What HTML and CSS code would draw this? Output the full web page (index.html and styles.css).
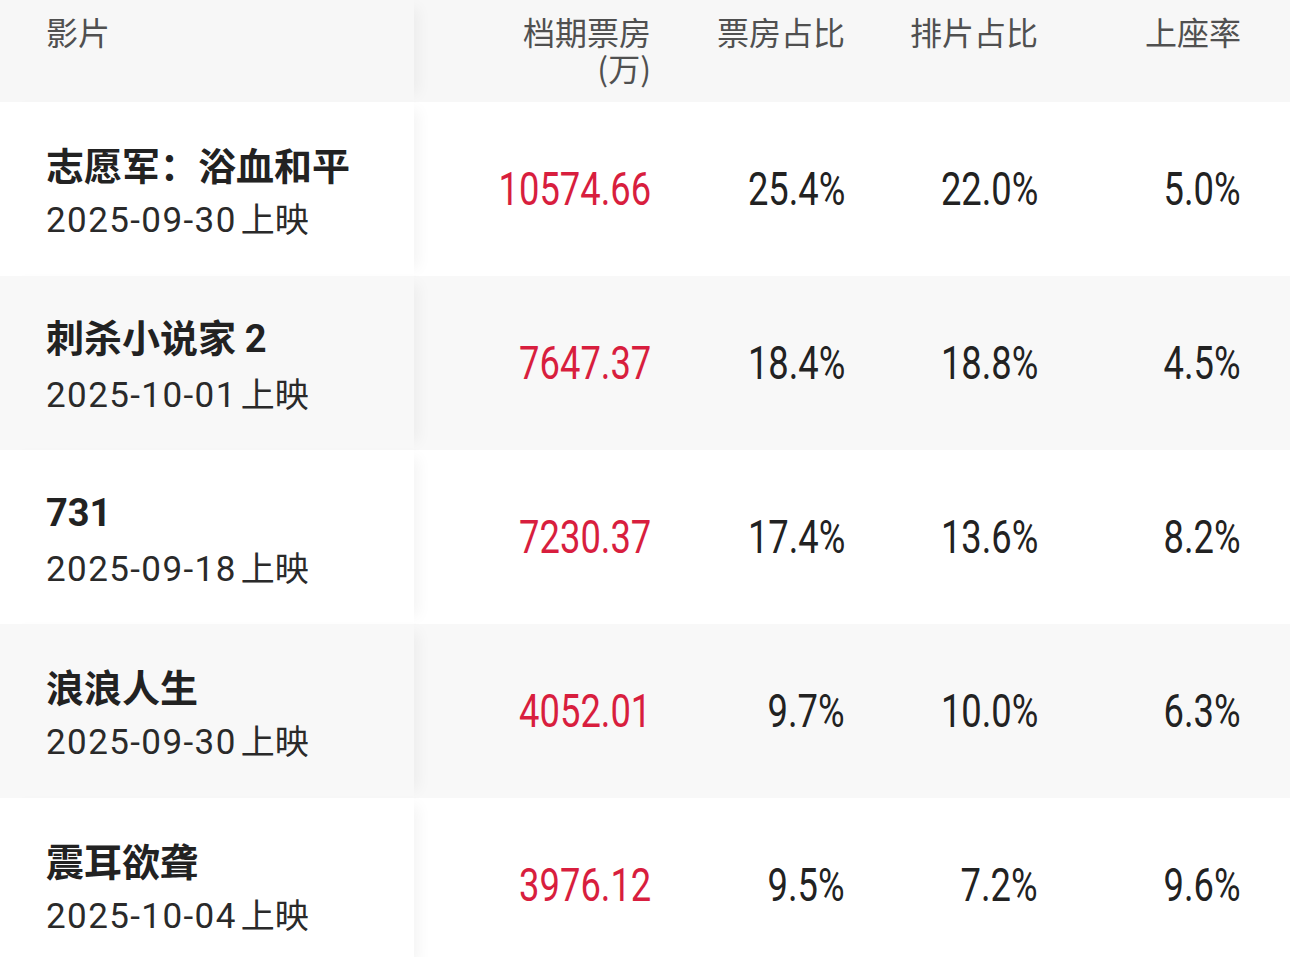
FILE: index.html
```html
<!DOCTYPE html>
<html lang="zh-CN">
<head>
<meta charset="utf-8">
<title>档期票房</title>
<link rel="stylesheet" href="styles.css">
</head>
<body>
<div class="table">
  <div class="row head">
    <div class="film">影片</div>
    <div class="cell">档期票房<br>(万)</div>
    <div class="cell">票房占比</div>
    <div class="cell">排片占比</div>
    <div class="cell">上座率</div>
  </div>
  <div class="row">
    <div class="film"><div class="name">志愿军：浴血和平</div><div class="date"><span class="d">2025-09-30</span>上映</div></div>
    <div class="cell num red"><span>10574.66</span></div>
    <div class="cell num"><span>25.4%</span></div>
    <div class="cell num"><span>22.0%</span></div>
    <div class="cell num"><span>5.0%</span></div>
  </div>
  <div class="row alt">
    <div class="film"><div class="name">刺杀小说家 <span class="lat">2</span></div><div class="date"><span class="d">2025-10-01</span>上映</div></div>
    <div class="cell num red"><span>7647.37</span></div>
    <div class="cell num"><span>18.4%</span></div>
    <div class="cell num"><span>18.8%</span></div>
    <div class="cell num"><span>4.5%</span></div>
  </div>
  <div class="row">
    <div class="film"><div class="name"><span class="lat">731</span></div><div class="date"><span class="d">2025-09-18</span>上映</div></div>
    <div class="cell num red"><span>7230.37</span></div>
    <div class="cell num"><span>17.4%</span></div>
    <div class="cell num"><span>13.6%</span></div>
    <div class="cell num"><span>8.2%</span></div>
  </div>
  <div class="row alt">
    <div class="film"><div class="name">浪浪人生</div><div class="date"><span class="d">2025-09-30</span>上映</div></div>
    <div class="cell num red"><span>4052.01</span></div>
    <div class="cell num"><span>9.7%</span></div>
    <div class="cell num"><span>10.0%</span></div>
    <div class="cell num"><span>6.3%</span></div>
  </div>
  <div class="row">
    <div class="film"><div class="name">震耳欲聋</div><div class="date"><span class="d">2025-10-04</span>上映</div></div>
    <div class="cell num red"><span>3976.12</span></div>
    <div class="cell num"><span>9.5%</span></div>
    <div class="cell num"><span>7.2%</span></div>
    <div class="cell num"><span>9.6%</span></div>
  </div>
</div>
</body>
</html>
```
FILE: styles.css
```css
html, body {
  margin: 0;
  padding: 0;
  background: #ffffff;
}
body {
  font-family: "Noto Sans CJK SC", "Noto Sans", sans-serif;
  color: #222222;
  overflow: hidden;
}
.table {
  width: 1290px;
}
.row {
  display: grid;
  grid-template-columns: 414px 237px 194px 193px 203px;
  height: 174px;
  align-items: center;
  background: #ffffff;
}
.row.alt {
  background: #f8f8f8;
}
.row.head {
  height: 102px;
  background: #f7f7f7;
  align-items: stretch;
}
.film {
  height: 100%;
  box-sizing: border-box;
  padding: 6px 0 0 46px;
  display: flex;
  flex-direction: column;
  justify-content: center;
  background: inherit;
  position: relative;
  z-index: 1;
  box-shadow: 12px 0 14px -8px rgba(0, 0, 0, 0.05);
}
.cell {
  text-align: right;
}
.head .film,
.head .cell {
  font-size: 32px;
  line-height: 36px;
  color: #505050;
  padding-top: 13px;
  justify-content: flex-start;
}
.name {
  font-size: 38px;
  font-weight: 700;
  line-height: 54px;
  color: #222222;
  white-space: nowrap;
}
.lat {
  font-family: "Roboto", "Liberation Sans", sans-serif;
  font-weight: 700;
}
.date {
  font-size: 34px;
  line-height: 54px;
  color: #2a2a2a;
  white-space: nowrap;
}
.date .d {
  font-family: "Roboto", "Noto Sans CJK SC", sans-serif;
  font-size: 35px;
  letter-spacing: 1.4px;
  margin-right: 4px;
}
.num {
  font-family: "Roboto", sans-serif;
  font-size: 46px;
  line-height: 54px;
  color: #222222;
}
.num span {
  display: inline-block;
  transform: scaleX(0.79);
  transform-origin: right center;
}
.red {
  color: #d81e3e;
}
```
